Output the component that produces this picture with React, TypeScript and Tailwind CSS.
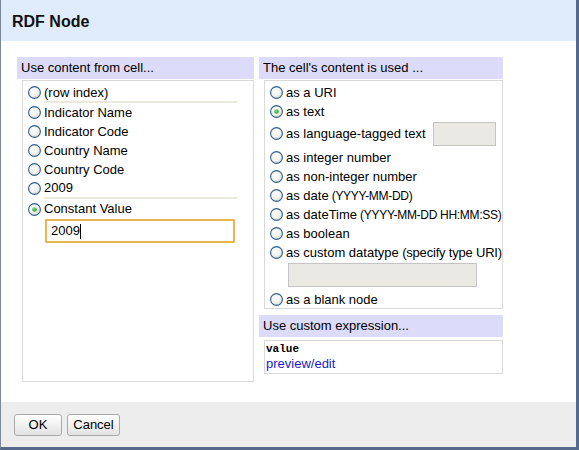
import React from "react";

function Radio({ checked = false }: { checked?: boolean }) {
  return (
    <svg width="13" height="13" viewBox="0 0 13 13" className="shrink-0">
      <defs>
        <radialGradient id={checked ? "rgc" : "rgu"} cx="0.4" cy="0.35" r="0.7">
          <stop offset="0" stopColor="#ffffff" />
          <stop offset="0.6" stopColor="#f2f2ee" />
          <stop offset="1" stopColor="#d4d4cc" />
        </radialGradient>
        <radialGradient id="dot" cx="0.4" cy="0.35" r="0.7">
          <stop offset="0" stopColor="#7fe07f" />
          <stop offset="1" stopColor="#1e9a1e" />
        </radialGradient>
      </defs>
      <circle cx="6.5" cy="6.5" r="5.9" fill={`url(#${checked ? "rgc" : "rgu"})`} stroke="#2d5f90" strokeWidth="1.1" />
      {checked && <circle cx="6.5" cy="6.5" r="2.3" fill="url(#dot)" />}
    </svg>
  );
}

function Row({ label, checked = false, hint, hintCls = "text-[12px] tracking-[-0.3px]", cls = "h-[19px]" }: { label: string; checked?: boolean; hint?: string; hintCls?: string; cls?: string }) {
  return (
    <div className={`flex shrink-0 items-center gap-[3px] ${cls}`}>
      <Radio checked={checked} />
      <span className="whitespace-nowrap">
        {label}
        {hint && <span className={hintCls}> {hint}</span>}
      </span>
    </div>
  );
}

function Sep() {
  return <div className="shrink-0 ml-[16px] mr-[16px] h-[2px] bg-[#ebe8dc]" />;
}

export default function App() {
  return (
    <div className="w-[579px] h-[450px] flex flex-col bg-white border-l border-l-[#7d8897] border-r-[3px] border-r-[#56698a] border-b-[3px] border-b-[#56698a] font-['Liberation_Sans',Arial,sans-serif] text-[13px] text-black">
      <div className="h-[41px] shrink-0 bg-[#e0ebfb] pl-[11px] pt-[2px] flex items-center text-[16px] font-bold text-[#111]">
        RDF Node
      </div>
      <div className="flex-1 bg-white pt-[16px] pl-[16px] flex gap-[5px]">
        <div className="w-[237px] flex flex-col">
          <div className="h-[22px] bg-[#dcdcfa] pl-[4px] flex items-center">Use content from cell...</div>
          <div className="ml-[5px] mt-[1px] h-[302px] border border-[#d9d9d9] pl-[5px] pt-[3px] flex flex-col">
            <Row label="(row index)" cls="h-[17px]" />
            <Sep />
            <Row label="Indicator Name" />
            <Row label="Indicator Code" />
            <Row label="Country Name" />
            <Row label="Country Code" />
            <Row label="2009" cls="h-[18px]" />
            <Sep />
            <Row label="Constant Value" checked cls="h-[20px]" />
            <div className="shrink-0 ml-[17px] w-[190px] h-[24px] border-2 border-[#ebb44f] rounded-[1px] flex items-center pl-[4px]">
              <span>2009</span>
              <span className="w-[1px] h-[15px] bg-black" />
            </div>
          </div>
        </div>
        <div className="w-[244px] flex flex-col">
          <div className="h-[22px] bg-[#dcdcfa] pl-[4px] flex items-center">The cell's content is used ...</div>
          <div className="ml-[5px] mt-[1px] h-[229px] border border-[#d9d9d9] pl-[5px] pt-[2px] flex flex-col">
            <Row label="as a URI" />
            <Row label="as text" checked />
            <div className="flex shrink-0 items-center h-[25px] mb-[2px]">
              <Row label="as language-tagged text" />
              <div className="ml-[7px] w-[63px] h-[24px] bg-[#ebe9e4] border border-[#c4c4c4]" />
            </div>
            <Row label="as integer number" />
            <Row label="as non-integer number" />
            <Row label="as date" hint="(YYYY-MM-DD)" />
            <Row label="as dateTime" hint="(YYYY-MM-DD HH:MM:SS)" />
            <Row label="as boolean" />
            <Row label="as custom datatype" hint="(specify type URI)" hintCls="text-[13px] tracking-[-0.2px]" />
            <div className="shrink-0 ml-[18px] mt-[1px] w-[189px] h-[24px] bg-[#ebe9e4] border border-[#c4c4c4]" />
            <Row label="as a blank node" cls="h-[20px] pt-[5px]" />
          </div>
          <div className="mt-[6px] h-[22px] bg-[#dcdcfa] pl-[4px] flex items-center">Use custom expression...</div>
          <div className="ml-[5px] mt-[3px] h-[34px] border border-[#d9d9d9] pl-[1px] flex flex-col">
            <div className="font-['Liberation_Mono',monospace] font-bold text-[11px] leading-[14px] mt-[1px]">value</div>
            <div className="text-[#1a1acc] leading-[16px]">preview/edit</div>
          </div>
        </div>
      </div>
      <div className="h-[45px] shrink-0 bg-[#ededed] pl-[13px] pt-[12px] flex gap-[5px]">
        <button className="w-[48px] h-[22px] border border-[#a9a9a9] rounded-[3px] bg-gradient-to-b from-white to-[#e3e3e3] text-[13px]">OK</button>
        <button className="w-[53px] h-[22px] border border-[#a9a9a9] rounded-[3px] bg-gradient-to-b from-white to-[#e3e3e3] text-[13px]">Cancel</button>
      </div>
    </div>
  );
}
